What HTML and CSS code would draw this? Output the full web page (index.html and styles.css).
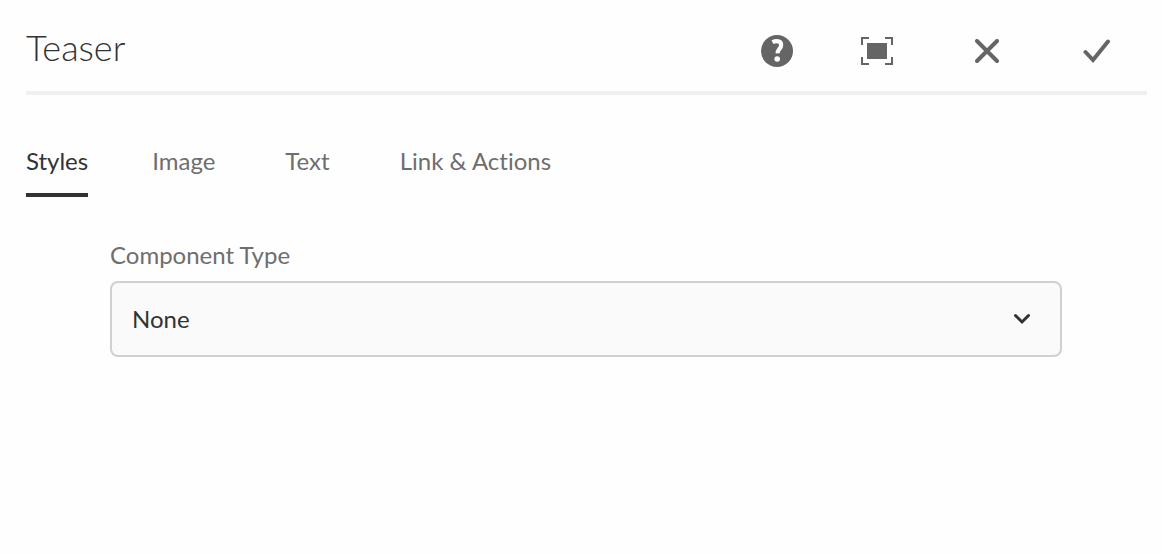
FILE: index.html
```html
<!DOCTYPE html>
<html lang="en">
<head>
  <meta charset="UTF-8" />
  <title>Teaser</title>
  <meta name="viewport" content="width=device-width, initial-scale=1.0" />
  <link rel="stylesheet" href="styles.css">
</head>
<body>
  <form class="dialog">
    <header class="dialog-header">
      <h1>Teaser</h1>
      <div class="actions">
        <button type="button" class="help" aria-label="Help">
          <svg width="32" height="32" viewBox="0 0 32 32">
            <circle cx="16" cy="16" r="16" fill="currentColor" />
            <path d="M11.500 7.200c1.400-.8 2.800-1.100 4.400-1.100 2.900 0 4.300 1.500 4.300 3.900 0 3.800-3.900 4.200-3.500 8.400" fill="none" stroke="#fefefe" stroke-width="4.200" />
            <circle cx="16.200" cy="24" r="2.800" fill="#fefefe" />
          </svg>
        </button>
        <button type="button" aria-label="Toggle fullscreen">
          <svg width="32" height="28" viewBox="0 0 32 28">
            <path d="M1 8V1h7M24 1h7v7M31 20v7h-7M8 27H1v-7" fill="none" stroke="currentColor" stroke-width="2" />
            <path d="M6 6h20v16H6z" fill="currentColor" />
          </svg>
        </button>
        <button type="button" aria-label="Cancel">
          <svg width="24" height="24" viewBox="0 0 24 24">
            <path d="M2 2l20 20M22 2L2 22" fill="none" stroke="currentColor" stroke-width="4" stroke-linecap="round" />
          </svg>
        </button>
        <button type="submit" aria-label="Done">
          <svg width="28" height="24" viewBox="0 0 28 24">
            <path d="M2.500 13l7.500 8L25 2.500" fill="none" stroke="currentColor" stroke-width="4" stroke-linecap="round" />
          </svg>
        </button>
      </div>
    </header>

    <nav class="tabs">
      <a href="#styles" class="active" aria-current="page">Styles</a>
      <a href="#image">Image</a>
      <a href="#text">Text</a>
      <a href="#link">Link &amp; Actions</a>
    </nav>

    <section class="panel" id="styles">
      <label for="component-type">Component Type</label>
      <div class="select">
        <select id="component-type">
          <option>None</option>
        </select>
        <svg width="18" height="12" viewBox="0 0 18 12">
          <path d="M2.500 2.500L9 9l6.500-6.500" fill="none" stroke="currentColor" stroke-width="3" stroke-linecap="round" />
        </svg>
      </div>
    </section>
  </form>
</body>
</html>
```
FILE: styles.css
```css
:root {
  --bg: #fefefe;
  --text: #323232;
  --muted: #6e6e6e;
  --icon: #656565;
  --line: #f0f0f0;
  --border: #d0d0d0;
}

* {
  box-sizing: border-box;
}

body {
  margin: 0;
  font-family: Lato, "Noto Sans", sans-serif;
  font-size: 24px;
  line-height: 32px;
  font-variant-ligatures: none;
  color: var(--text);
  background: var(--bg);
}

.dialog {
  padding: 10px 15px 24px 26px;
}

.dialog-header {
  display: flex;
  align-items: center;
  justify-content: space-between;
  height: 85px;
  border-bottom: 4px solid var(--line);
}

h1 {
  margin: 0;
  padding-bottom: 8px;
  font-size: 36px;
  line-height: 48px;
  font-weight: 300;
}

.actions {
  display: flex;
  gap: 10px;
}

.actions button {
  display: flex;
  align-items: center;
  justify-content: center;
  width: 100px;
  height: 48px;
  padding: 0;
  border: none;
  background: none;
  color: var(--icon);
  cursor: pointer;
}

.actions .help {
  width: 80px;
}

.tabs {
  display: flex;
  gap: 64px;
  margin-top: 50px;
}

.tabs a {
  padding-bottom: 16px;
  border-bottom: 4px solid transparent;
  color: var(--muted);
  text-decoration: none;
}

.tabs a + a {
  padding-right: 6px;
}

.tabs .active {
  color: var(--text);
  border-color: var(--text);
}

.panel {
  margin: 42px 85px 0 84px;
}

.panel label {
  display: block;
  margin-bottom: 10px;
  color: var(--muted);
}

.select {
  position: relative;
}

.select select {
  display: block;
  width: 100%;
  height: 76px;
  padding: 0 64px 0 20px;
  appearance: none;
  border: 2px solid var(--border);
  border-radius: 8px;
  background: #fafafa;
  color: var(--text);
  font: inherit;
}

.select svg {
  position: absolute;
  right: 31px;
  top: 32px;
  pointer-events: none;
}
```
